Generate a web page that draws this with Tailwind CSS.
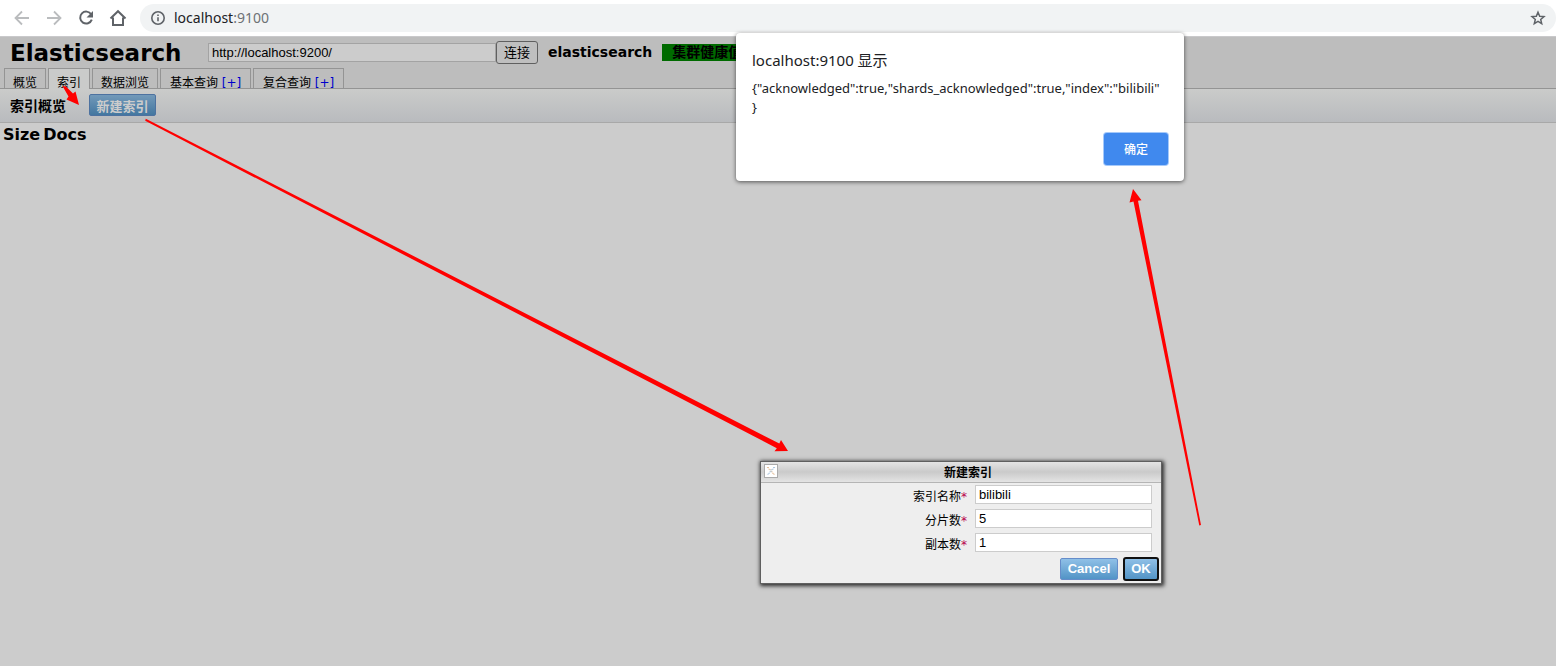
<!DOCTYPE html>
<html lang="zh-CN">
<head>
<meta charset="utf-8">
<title>Elasticsearch</title>
<script src="https://cdn.jsdelivr.net/npm/@tailwindcss/browser@4"></script>
</head>
<body class="relative flex min-h-screen flex-col overflow-hidden bg-[#ccc] font-['DejaVu_Sans','Noto_Sans_CJK_SC',sans-serif] text-xs text-black">

<!-- Browser bar -->
<nav class="flex h-9 items-center gap-2 bg-white pl-3 text-[#5f6368]" aria-label="browser">
  <button class="flex size-5 items-center justify-center text-[#babcbe]" aria-label="Back">
    <svg class="size-5" viewBox="0 0 20 20" fill="none" stroke="currentColor" stroke-width="1.8"><path d="M17 10H4M10 3.5 3.5 10l6.500 6.500"/></svg>
  </button>
  <button class="ml-1 flex size-5 items-center justify-center text-[#babcbe]" aria-label="Forward">
    <svg class="size-5" viewBox="0 0 20 20" fill="none" stroke="currentColor" stroke-width="1.8"><path d="M3 10h13M10 3.500 16.500 10 10 16.500"/></svg>
  </button>
  <button class="ml-1 flex size-5 items-center justify-center" aria-label="Reload">
    <svg class="size-5" viewBox="0 0 20 20"><path d="M15.200 6.300A6 6 0 1 0 15.800 11.700" fill="none" stroke="currentColor" stroke-width="2"/><path d="M17 3v6.500h-6.500z" fill="currentColor"/></svg>
  </button>
  <button class="ml-1 flex size-5 items-center justify-center" aria-label="Home">
    <svg class="size-5" viewBox="0 0 20 20" fill="none" stroke="currentColor" stroke-width="2"><path d="M2.500 10.500 10 3.200l7.500 7.300M5 9.500v7.500h10V9.500"/></svg>
  </button>
  <div class="ml-1 flex h-7 flex-1 items-center rounded-full bg-[#f1f3f4] px-2.5">
    <svg class="size-4 shrink-0" viewBox="0 0 16 16" fill="none" stroke="currentColor"><circle cx="8" cy="8" r="6.200" stroke-width="1.600"/><path d="M8 7.200v4M8 4.500v1.500" stroke-width="1.600"/></svg>
    <a href="#" class="ml-2 flex-1 font-['Noto_Sans',sans-serif] text-sm text-[#202124]">localhost<span class="text-[#6d7175]">:9100</span></a>
    <button aria-label="Bookmark"><svg class="size-4" viewBox="0 0 16 16" fill="none" stroke="currentColor" stroke-width="1.500"><path d="m8 2.200 1.700 4 4.300.4-3.300 2.800 1 4.200L8 11.400l-3.700 2.200 1-4.200L2 6.600l4.300-.4z"/></svg></button>
  </div>
</nav>

<header class="flex flex-col border-t border-b border-t-[#c9c9cb] border-b-[#949494] bg-[#bdbdbd]">
  <div class="flex h-[30px] items-center pl-2.5">
    <h1 class="w-[198px] pt-0.5 text-[23px] leading-[30px] font-bold">Elasticsearch</h1>
    <input aria-label="Cluster address" value="http://localhost:9200/" class="h-[19px] w-[288px] border border-[#a3a3a3] bg-[#ccc] px-[3px] font-['Liberation_Sans',sans-serif] text-[13px] outline-none">
    <button class="h-[23px] w-[42px] rounded-[3px] border border-[#606060] bg-[#bfbfbf] text-[13px] leading-none">连接</button>
    <span class="ml-2.5 text-sm font-bold">elasticsearch</span>
    <span class="ml-2.5 h-[17px] overflow-hidden bg-[#006a00] px-2.5 text-sm leading-[17px] font-bold whitespace-nowrap">集群健康值</span>
  </div>
  <div role="tablist" class="-mb-px flex gap-0.5 pt-px pl-1 leading-4">
    <button role="tab" class="h-[21px] border border-[#949494] px-2 pt-1.5">概览</button>
    <button role="tab" aria-selected="true" class="h-[21px] border border-b-0 border-[#949494] bg-[#cacbca] px-2 pt-1.5">索引</button>
    <button role="tab" class="h-[21px] border border-[#949494] px-2 pt-1.5">数据浏览</button>
    <button role="tab" class="h-[21px] w-[91px] border border-[#949494] pt-1.5 whitespace-nowrap">基本查询 <span class="text-[#0000cc]">[+]</span></button>
    <button role="tab" class="h-[21px] w-[91px] border border-[#949494] pt-1.5 whitespace-nowrap">复合查询 <span class="text-[#0000cc]">[+]</span></button>
  </div>
</header>

<div class="flex h-[34px] items-center gap-[23px] border-b border-[#a8a8a8] bg-linear-to-b from-[#cacbca] to-[#b9bbbe] pl-2.5">
  <h2 class="text-sm font-bold">索引概览</h2>
  <button class="mb-0.5 h-[22px] w-[67px] rounded-xs border border-[#4d72a0] bg-linear-to-b from-[#7299b9] to-[#4377a0] pt-0.5 text-[13px] leading-5 font-bold text-[#ccc]">新建索引</button>
</div>

<main class="flex-1">
  <table class="ml-[3px] text-base leading-6">
    <thead><tr><th class="pr-[3px]">Size</th><th>Docs</th></tr></thead>
  </table>
</main>

<!-- Alert -->
<div role="alertdialog" aria-labelledby="alert-title" class="absolute top-[33px] left-[736px] flex w-[448px] flex-col rounded-[4px] bg-white p-4 font-['Noto_Sans','Noto_Sans_CJK_SC',sans-serif] text-[#202124] shadow-[0_1px_4px_rgba(0,0,0,0.6)]">
  <h2 id="alert-title" class="text-[15px] leading-[22px]">localhost:9100 显示</h2>
  <p class="mt-2 text-[13px] leading-[19px]">{"acknowledged":true,"shards_acknowledged":true,"index":"bilibili"<br>}</p>
  <button class="mt-4 h-8 w-16 self-end rounded-[3px] bg-[#4089ee] pt-0.5 text-xs font-medium text-white ring-1 ring-[#a5c9fa]">确定</button>
</div>

<!-- New index form -->
<form class="absolute top-[461px] left-[760px] w-[402px] border border-[#5f5f5f] bg-[#eee] shadow-[1px_1px_4px_1px_rgba(0,0,0,0.8)]">
  <div class="relative flex h-[21px] items-center justify-center border-b border-[#b5b5b5] bg-linear-to-b from-[#e4e4e4] via-[#cacaca] to-[#e4e4e4] pt-0.5 pl-3.5 font-bold">
    <button type="button" aria-label="Close" class="absolute top-0.5 left-[3px] flex size-3.5 items-center justify-center border border-[#aaa] bg-white">
      <svg class="size-2.5" viewBox="0 0 10 10" fill="none" stroke-width="1" stroke-dasharray="1.500 1"><path stroke="#e4bd96" d="m1 1 7 8M2 1l7 8"/><path stroke="#a9c5df" d="M8 1 1 9M9 1 2 9"/></svg>
    </button>
    新建索引
  </div>
  <div class="flex flex-col gap-[5px] pt-0.5 pr-[9px]">
    <div class="flex h-[19px] items-center justify-end gap-2"><label for="name" class="pt-1 leading-4">索引名称<span class="text-[#b8004c]">*</span></label><input id="name" value="bilibili" class="h-[19px] w-[177px] border border-[#ccc] bg-white px-[3px] font-['Liberation_Sans',sans-serif] text-[13px] outline-none"></div>
    <div class="flex h-[19px] items-center justify-end gap-2"><label for="shards" class="pt-1 leading-4">分片数<span class="text-[#b8004c]">*</span></label><input id="shards" value="5" class="h-[19px] w-[177px] border border-[#ccc] bg-white px-[3px] font-['Liberation_Sans',sans-serif] text-[13px] outline-none"></div>
    <div class="flex h-[19px] items-center justify-end gap-2"><label for="replicas" class="pt-1 leading-4">副本数<span class="text-[#b8004c]">*</span></label><input id="replicas" value="1" class="h-[19px] w-[177px] border border-[#ccc] bg-white px-[3px] font-['Liberation_Sans',sans-serif] text-[13px] outline-none"></div>
  </div>
  <div class="flex items-center justify-end gap-[5px] pt-[5px] pr-0.5 pb-0.5 font-['Liberation_Sans',sans-serif] text-[13px] leading-5 font-bold text-white">
    <button type="button" class="h-[22px] w-[58px] rounded-xs border border-[#668dca] bg-linear-to-b from-[#8fc0e7] to-[#5294c6]">Cancel</button>
    <button class="h-6 w-9 rounded-[3px] border-2 border-[#101010] bg-linear-to-b from-[#8fc0e7] to-[#5294c6]">OK</button>
  </div>
</form>

<!-- Step arrows -->
<svg class="pointer-events-none absolute top-0 left-0 h-[666px] w-[1556px]" viewBox="0 0 1556 666" fill="#f00" aria-hidden="true">
  <path d="M62.500 86 68.500 96.500 66.500 99.500 79 105 75.500 91.500 73 93.500 66 86.500z"/>
  <path d="M145.800 118.800 779.300 443.500 781 440 788 451 774.500 451.300 776.800 448.200 145.200 120.700z"/>
  <path d="M1199.300 525.500 1133.500 201.500 1129.500 202.500 1133 189 1141.500 200.200 1138 200.800 1201 525z"/>
</svg>
</body>
</html>
